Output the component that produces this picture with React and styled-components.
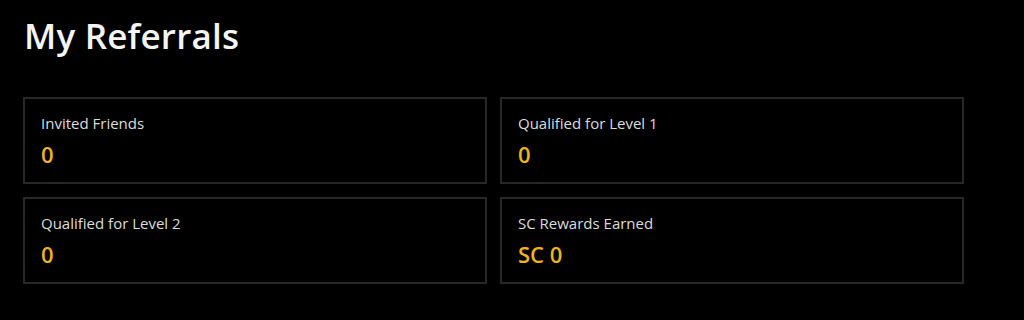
import React from 'react';
import styled, { createGlobalStyle } from 'styled-components';

const GlobalStyle = createGlobalStyle`
  html, body {
    margin: 0;
    padding: 0;
    background: #000;
  }
  body {
    font-family: "Open Sans", "Noto Sans", sans-serif;
    color: #fff;
  }
`;

const Page = styled.div`
  padding: 13px 23px 0 23px;
  width: 1024px;
  height: 320px;
  box-sizing: border-box;
  background: #000;
`;

const Title = styled.h1`
  margin: 0 0 0 1px;
  font-size: 35px;
  line-height: 46px;
  font-weight: 600;
  letter-spacing: 0.2px;
  color: #f4f4f4;
`;

const StatsGrid = styled.div`
  display: grid;
  grid-template-columns: 464px 464px;
  column-gap: 13px;
  row-gap: 13px;
  margin-top: 38px;
`;

const Card = styled.div`
  box-sizing: border-box;
  height: 87px;
  border: 2px solid #282828;
  padding: 14px 16px 0 16px;
  display: flex;
  flex-direction: column;
  gap: 5px;
`;

const Label = styled.div`
  font-size: 15px;
  line-height: 21px;
  color: #dcdcdc;
`;

const Value = styled.div`
  font-size: 22px;
  line-height: 30px;
  font-weight: 600;
  color: #f2b318;
`;

const stats = [
  { label: 'Invited Friends', value: '0' },
  { label: 'Qualified for Level 1', value: '0' },
  { label: 'Qualified for Level 2', value: '0' },
  { label: 'SC Rewards Earned', value: 'SC 0' },
];

export default function App() {
  return (
    <>
      <GlobalStyle />
      <Page>
        <Title>My Referrals</Title>
        <StatsGrid>
          {stats.map((s) => (
            <Card key={s.label}>
              <Label>{s.label}</Label>
              <Value>{s.value}</Value>
            </Card>
          ))}
        </StatsGrid>
      </Page>
    </>
  );
}
